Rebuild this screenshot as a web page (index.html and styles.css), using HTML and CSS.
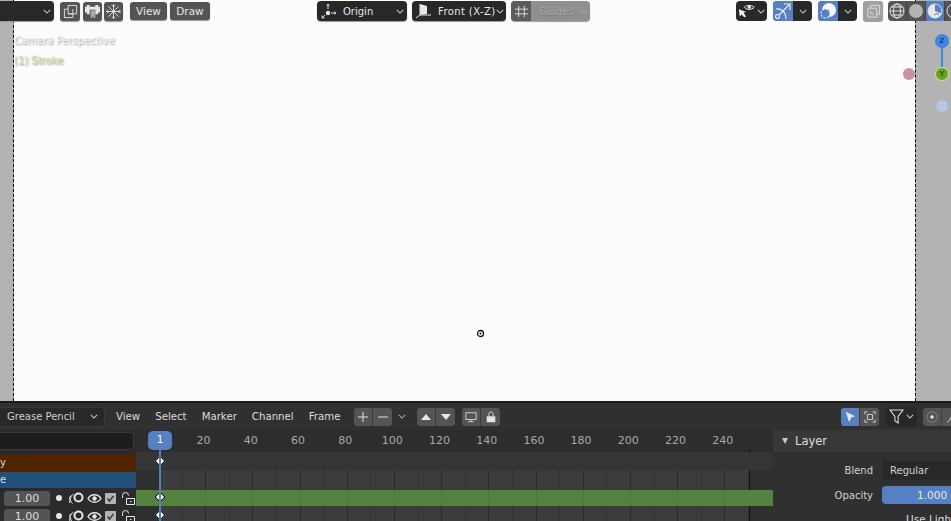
FILE: index.html
```html
<!DOCTYPE html>
<html lang="en">
<head>
    <meta charset="UTF-8">
    <title>Grease Pencil</title>
    <link rel="stylesheet" href="styles.css">
</head>
<body>
<div class="app">
    <!-- 3D viewport -->
    <div class="viewport">
        <div class="side side-left"></div>
        <div class="canvas">
            <p class="overlay-text">Camera Perspective</p>
            <p class="overlay-text stroke-name">(1) Stroke</p>
        </div>
        <div class="side side-right"></div>

        <div class="toolbar">
            <div class="group group-left">
                <div class="select mode-select"><svg class="chev" viewBox="0 0 10 6"><path d="M1 1l4 4 4-4"/></svg></div>
                <div class="icon-btns">
                    <button class="btn icon"><svg viewBox="0 0 16 16"><path d="M5.500 1.500h9v9h-9zM5.500 5.500h-4v9h9v-4"/><path d="M5.500 10.500h5v-5"/></svg></button>
                    <button class="btn icon"><svg viewBox="0 0 16 16"><path class="fill" d="M0 3h2V1h3v2h6V1h3v2h2v6h-2v2h-3V6H5v5H2V9H0z"/><path class="fill dim" d="M6 7h5v8H9v-2H8v2H6z"/></svg></button>
                    <button class="btn icon"><svg viewBox="0 0 16 16"><path d="M8 0v16M0 8h16M2.500 2.500l11 11M13.500 2.500l-11 11M6 1l2 2 2-2M6 15l2-2 2 2M1 6l2 2-2 2M15 6l-2 2 2 2"/></svg></button>
                </div>
                <button class="btn text-btn">View</button>
                <button class="btn text-btn">Draw</button>
            </div>
            <div class="group group-center">
                <div class="select origin-select">
                    <svg class="lead" viewBox="0 0 16 16"><circle class="fill" cx="7" cy="10" r="2.200"/><path d="M7 1v5M5.500 2.500L7 1l1.500 1.500M10 10h5M13.500 8.500L15 10l-1.500 1.500M1 15l3-3M1 12.500V15h2.500"/></svg>
                    <span>Origin</span>
                    <svg class="chev" viewBox="0 0 10 6"><path d="M1 1l4 4 4-4"/></svg>
                </div>
                <div class="select front-select">
                    <svg class="lead" viewBox="0 0 16 16"><path class="fill" d="M4 1l7 2v8l-7 1z"/><path d="M4 1v11L0 15M4 12h11"/></svg>
                    <span>Front (X-Z)</span>
                    <svg class="chev" viewBox="0 0 10 6"><path d="M1 1l4 4 4-4"/></svg>
                </div>
                <div class="guides">
                    <span class="guides-icon"><svg viewBox="0 0 16 16"><path d="M5 2v12M11 2v12M1 5.500h14M1 10.500h14"/></svg></span>
                    <span class="guides-label">Guides</span>
                    <svg class="chev" viewBox="0 0 10 6"><path d="M1 1l4 4 4-4"/></svg>
                </div>
            </div>
            <div class="group group-right">
                <div class="split vis-split">
                    <span class="split-icon"><svg viewBox="0 0 20 18"><path class="fill" d="M1 7l8 3-3 1 3 4-2 1-3-3-2 2z"/><path d="M7 5c2-3 8-3 11 0-3 3-8 3-11 0z"/><circle class="fill" cx="12.500" cy="4.800" r="1.800"/></svg></span>
                    <svg class="chev" viewBox="0 0 10 6"><path d="M1 1l4 4 4-4"/></svg>
                </div>
                <div class="split gizmo-split">
                    <span class="split-icon on"><svg viewBox="0 0 18 18"><circle cx="3.500" cy="14.500" r="2"/><path d="M5 13L15 3M10 2h6v6M2 7c5-1 10 3 10 10"/></svg></span>
                    <span class="split-chev"><svg class="chev" viewBox="0 0 10 6"><path d="M1 1l4 4 4-4"/></svg></span>
                </div>
                <div class="split overlay-split">
                    <span class="split-icon on"><svg viewBox="0 0 18 18"><circle class="fill" cx="10" cy="8" r="7"/><circle class="dash" cx="6.500" cy="11.500" r="4.500"/></svg></span>
                    <span class="split-chev"><svg class="chev" viewBox="0 0 10 6"><path d="M1 1l4 4 4-4"/></svg></span>
                </div>
                <button class="btn icon xray"><svg viewBox="0 0 16 16"><path d="M5 4V1.500h9.500V11H12M2 4.500h9.500V14H2zM5 7.500v3h3"/></svg></button>
                <div class="shading">
                    <span class="shade"><svg viewBox="0 0 16 16"><circle cx="8" cy="8" r="7"/><ellipse cx="8" cy="8" rx="3.500" ry="7"/><path d="M1 8h14M2 4h12M2 12h12"/></svg></span>
                    <span class="shade"><svg viewBox="0 0 16 16"><circle class="solid" cx="8" cy="8" r="7"/></svg></span>
                    <span class="shade on"><svg viewBox="0 0 16 16"><circle cx="8" cy="8" r="7"/><path class="fill" d="M8 1a7 7 0 0 0 0 14 7 7 0 0 0 6.500-4.500L8 8z"/><path class="cut" d="M7 12l3-1.500 2 1"/></svg></span>
                    <span class="shade"><svg viewBox="0 0 16 16"><circle cx="8" cy="8" r="7"/></svg></span>
                </div>
            </div>
        </div>

        <div class="gizmo">
            <span class="axis-line"></span>
            <span class="axis axis-z">Z</span>
            <span class="axis axis-y">Y</span>
            <span class="axis axis-x"></span>
            <span class="axis axis-nz"></span>
        </div>
        <svg class="cursor3d" viewBox="0 0 9 9"><circle cx="4.500" cy="4.500" r="3"/><circle class="dot" cx="4.500" cy="4.500" r="1"/></svg>
    </div>

    <!-- dope sheet -->
    <div class="dopesheet">
        <div class="ds-head">
            <div class="ds-head-left">
                <div class="mode-box"><span>Grease Pencil</span><svg class="chev" viewBox="0 0 10 6"><path d="M1 1l4 4 4-4"/></svg></div>
                <nav class="menu">
                    <span>View</span><span>Select</span><span>Marker</span><span>Channel</span><span>Frame</span>
                </nav>
                <div class="pair">
                    <span><svg viewBox="0 0 12 12"><path d="M6 1v10M1 6h10"/></svg></span>
                    <span><svg viewBox="0 0 12 12"><path d="M1 6h10"/></svg></span>
                </div>
                <svg class="chev lone" viewBox="0 0 10 6"><path d="M1 1l4 4 4-4"/></svg>
                <div class="pair">
                    <span><svg viewBox="0 0 12 12"><path class="fill" d="M6 3l5 6H1z"/></svg></span>
                    <span><svg viewBox="0 0 12 12"><path class="fill" d="M6 9L1 3h10z"/></svg></span>
                </div>
                <div class="pair screen-pair">
                    <span><svg viewBox="0 0 14 14"><path d="M1 2h12v8H1zM7 10v2M4 12.500h6"/></svg></span>
                    <span><svg viewBox="0 0 12 14"><path class="fill" d="M1 6h10v7H1z"/><path d="M3.500 6V3.500a2.500 2.500 0 0 1 5 0V6"/></svg></span>
                </div>
            </div>
            <div class="ds-head-right">
                <div class="pair select-pair">
                    <span class="on"><svg viewBox="0 0 14 14"><path class="fill" d="M2 1l11 5-4.500 1.500L6 13z"/></svg></span>
                    <span><svg viewBox="0 0 14 14"><path d="M1 4V1h3M10 1h3v3M13 10v3h-3M4 13H1v-3M4 4h6v6H4z"/></svg></span>
                </div>
                <div class="filter-box"><svg viewBox="0 0 14 14"><path d="M1 1h12L8.500 7v6L5.500 11V7z"/></svg><svg class="chev" viewBox="0 0 10 6"><path d="M1 1l4 4 4-4"/></svg></div>
                <div class="pair prop-pair">
                    <span><svg viewBox="0 0 14 14"><circle class="ring" cx="7" cy="7" r="6"/><circle class="fill" cx="7" cy="7" r="2"/></svg></span>
                    <span><svg viewBox="0 0 14 14"><path d="M1 13C6 13 5 1 13 1"/></svg></span>
                </div>
            </div>
        </div>

        <div class="ds-body">
            <div class="channels">
                <div class="search-row"><div class="search"></div></div>
                <div class="chan chan-brown">y</div>
                <div class="chan chan-blue">e</div>
                <div class="chan layer-row">
                    <span class="num">1.00</span>
                    <span class="row-dot"></span>
                    <svg class="ico-ghost" viewBox="0 0 15 13"><circle cx="9.500" cy="5.500" r="4"/><path class="thin" d="M4.500 2.200A5.500 5.500 0 0 0 3.500 11.500M2.200 3.500A6 6 0 0 0 1 11"/></svg>
                    <svg class="ico-eye" viewBox="0 0 15 13"><path d="M1 6.500c3-5 10-5 13 0-3 5-10 5-13 0z"/><circle class="fill" cx="7.500" cy="6.500" r="2.200"/></svg>
                    <span class="check"><svg viewBox="0 0 11 11"><path d="M2.500 5.500l2 2.500 4-5"/></svg></span>
                    <svg class="ico-lock" viewBox="0 0 15 13"><path d="M2.500 6V3.500a3 3 0 0 1 6 0M6.500 6.500h8v6h-8zM10 9.500h1.500"/></svg>
                </div>
                <div class="chan layer-row">
                    <span class="num">1.00</span>
                    <span class="row-dot"></span>
                    <svg class="ico-ghost" viewBox="0 0 15 13"><circle cx="9.500" cy="5.500" r="4"/><path class="thin" d="M4.500 2.200A5.500 5.500 0 0 0 3.500 11.500M2.200 3.500A6 6 0 0 0 1 11"/></svg>
                    <svg class="ico-eye" viewBox="0 0 15 13"><path d="M1 6.500c3-5 10-5 13 0-3 5-10 5-13 0z"/><circle class="fill" cx="7.500" cy="6.500" r="2.200"/></svg>
                    <span class="check"><svg viewBox="0 0 11 11"><path d="M2.500 5.500l2 2.500 4-5"/></svg></span>
                    <svg class="ico-lock" viewBox="0 0 15 13"><path d="M2.500 6V3.500a3 3 0 0 1 6 0M6.500 6.500h8v6h-8zM10 9.500h1.500"/></svg>
                </div>
            </div>

            <div class="timeline">
                <div class="ruler">
                    <span>20</span><span>40</span><span>60</span><span>80</span><span>100</span><span>120</span>
                    <span>140</span><span>160</span><span>180</span><span>200</span><span>220</span><span>240</span>
                </div>
                <div class="track track-summary"></div>
                <div class="track track-grid track-gap"></div>
                <div class="track track-green"></div>
                <div class="track track-grid track-plain"></div>
                <span class="playhead">1</span>
                <span class="key key-a"></span>
                <span class="key key-b"></span>
                <span class="key key-c"></span>
                <span class="playhead-line"></span>
            </div>

            <aside class="panel">
                <h3 class="panel-title"><span class="tri"></span>Layer</h3>
                <div class="prop prop-blend">
                    <label>Blend</label>
                    <div class="field dark">Regular</div>
                </div>
                <div class="prop prop-opacity">
                    <label>Opacity</label>
                    <div class="field blue">1.000</div>
                </div>
                <div class="cut-row">Use Lights</div>
            </aside>
        </div>
    </div>
</div>
</body>
</html>
```

FILE: styles.css
```css
* {
    margin: 0;
    padding: 0;
    box-sizing: border-box;
}
body {
    font-family: "DejaVu Sans", sans-serif;
    font-size: 10px;
    background: #303030;
    overflow: hidden;
}
svg {
    fill: none;
    stroke: #e0e0e0;
    stroke-width: 1;
}
svg .fill {
    fill: #e6e6e6;
    stroke: none;
}
svg .dim {
    fill: #a8a8a8;
}
.app {
    width: 951px;
    height: 521px;
    overflow: hidden;
    display: flex;
    flex-direction: column;
}

/* 3D viewport */
.viewport {
    position: relative;
    height: 401px;
    flex: none;
    display: flex;
    overflow: hidden;
}
.side {
    background: #b3b3b3;
}
.side-left {
    width: 14px;
    border-right: 1px dashed #000;
}
.side-right {
    width: 36px;
    border-left: 1px dashed #000;
}
.canvas {
    flex: 1;
    background: #fcfcfc;
    padding-top: 34px;
}
.overlay-text {
    height: 20px;
    line-height: 14px;
    color: #f6f6f6;
    text-shadow: 1px 1px 2px #8a8a8a;
}
.stroke-name {
    color: #d4e4a4;
}
.toolbar {
    position: absolute;
    top: 1px;
    left: 0;
    width: 951px;
    height: 20px;
    display: flex;
}
.group {
    display: flex;
    align-items: center;
    height: 20px;
}
.group-left {
    width: 317px;
}
.group-center {
    width: 419px;
    gap: 5px;
}
.group-right {
    flex: 1;
    overflow: hidden;
    height: 21px;
    align-items: flex-start;
}
.btn {
    height: 19px;
    border: none;
    border-radius: 3px;
    background: #545454;
    color: #e6e6e6;
    font: inherit;
    box-shadow: 0 1px 1px #9a9a9a;
    display: flex;
    align-items: center;
    justify-content: center;
}
.btn.icon svg {
    width: 15px;
    height: 15px;
}
.select {
    height: 20px;
    background: #282828;
    border-radius: 4px;
    color: #e6e6e6;
    display: flex;
    align-items: center;
    box-shadow: 0 1px 1px #9a9a9a;
}
.chev {
    width: 8px;
    height: 5px;
    stroke: #c8c8c8;
    stroke-width: 1.300;
    flex: none;
}
.mode-select {
    width: 54px;
    border-radius: 0 4px 4px 0;
    justify-content: flex-end;
    padding-right: 3px;
}
.icon-btns {
    display: flex;
    gap: 2px;
    margin: 0 7px 0 6px;
}
.icon-btns .btn {
    width: 19px;
}
.icon-btns .btn:first-child {
    width: 20px;
    margin-right: 1px;
}
.text-btn {
    width: 37px;
    height: 18px;
    margin-right: 3px;
    font-size: 10.500px;
}
.text-btn + .text-btn {
    width: 40px;
}
.select .lead {
    width: 16px;
    height: 16px;
    margin-left: 4px;
    flex: none;
}
.origin-select {
    width: 90px;
}
.origin-select span {
    margin: 0 auto 0 6px;
}
.origin-select .chev {
    margin-right: 3px;
}
.front-select {
    width: 94px;
}
.front-select span {
    margin: 0 auto 0 6px;
    letter-spacing: .4px;
}
.front-select .chev {
    margin-right: 2px;
}
.guides {
    width: 79px;
    height: 20px;
    display: flex;
    align-items: center;
    border-radius: 4px;
    overflow: hidden;
    background: #8f8f8f;
    box-shadow: 0 1px 1px #9a9a9a;
}
.guides-icon {
    width: 20px;
    height: 20px;
    background: #5c5c5c;
    display: flex;
    align-items: center;
    justify-content: center;
}
.guides-icon svg {
    width: 15px;
    height: 15px;
}
.guides-label {
    margin-left: 8px;
    color: #a8a8a8;
    text-shadow: 0 1px 1px #777;
}
.guides .chev {
    margin-left: 6px;
    stroke: #a8a8a8;
}
.split {
    height: 20px;
    flex: none;
    display: flex;
    align-items: center;
    background: #282828;
    border-radius: 4px;
    overflow: hidden;
}
.vis-split {
    width: 31px;
    margin-right: 6px;
}
.vis-split .split-icon {
    width: 20px;
    margin-left: 1px;
}
.split-icon {
    width: 20px;
    height: 20px;
    display: flex;
    align-items: center;
    justify-content: center;
}
.split-icon svg {
    width: 18px;
    height: 18px;
    stroke-width: 1.100;
    stroke: #f0f0f0;
}
.split-icon .fill {
    fill: #f4f4f4;
}
.split-icon.on {
    background: #5680c2;
}
.split-chev {
    flex: 1;
    display: flex;
    justify-content: center;
}
.gizmo-split,
.overlay-split {
    width: 39px;
    margin-right: 6px;
}
.overlay-split .dash {
    fill: #5680c2;
    stroke-dasharray: 2 1.500;
}
.xray {
    width: 20px;
    height: 20px;
    flex: none;
    background: #a0a0a0;
    margin-right: 5px;
}
.shading {
    display: flex;
    height: 20px;
    width: 63px;
    flex: none;
    background: #545454;
    border-radius: 4px 0 0 4px;
    overflow: hidden;
}
.shade {
    width: 19px;
    height: 20px;
    flex: none;
    display: flex;
    align-items: center;
    justify-content: center;
    border-right: 1px solid #444;
}
.shade svg {
    width: 16px;
    height: 16px;
}
.shade svg .solid {
    fill: #b4b4b4;
    stroke: none;
}
.shade .cut {
    stroke: #5680c2;
}
.shade.on {
    background: #5680c2;
}

/* navigation gizmo */
.gizmo {
    position: absolute;
    left: 902px;
    top: 34px;
    width: 49px;
    height: 80px;
}
.axis {
    position: absolute;
    border-radius: 50%;
    font-size: 7px;
    text-align: center;
    color: #1a1a1a;
}
.axis-z {
    left: 33px;
    top: 0;
    width: 14px;
    height: 14px;
    line-height: 14px;
    background: #3d86e4;
}
.axis-y {
    left: 33px;
    top: 33px;
    width: 14px;
    height: 14px;
    line-height: 12px;
    background: #63a31e;
    border: 1px solid #d2e6a8;
}
.axis-x {
    left: 1px;
    top: 34px;
    width: 12px;
    height: 12px;
    background: #c8939c;
}
.axis-nz {
    left: 34px;
    top: 66px;
    width: 12px;
    height: 12px;
    background: #b4c8e4;
}
.axis-line {
    position: absolute;
    left: 39px;
    top: 7px;
    width: 2px;
    height: 30px;
    background: #3d86e4;
}
.cursor3d {
    position: absolute;
    left: 476px;
    top: 329px;
    width: 9px;
    height: 9px;
    stroke: #111;
    stroke-width: 1.300;
}
.cursor3d .dot {
    fill: #111;
    stroke: none;
}

/* dope sheet */
.dopesheet {
    flex: 1;
    min-height: 0;
    display: flex;
    flex-direction: column;
    border-top: 2px solid #1a1a1a;
    color: #dcdcdc;
}
.ds-head {
    height: 27px;
    flex: none;
    background: #303030;
    display: flex;
    align-items: center;
    justify-content: space-between;
}
.ds-head-left {
    display: flex;
    align-items: center;
}
.ds-head-right {
    display: flex;
    align-items: center;
    width: 110px;
    flex: none;
    overflow: hidden;
}
.mode-box {
    width: 105px;
    height: 20px;
    background: #282828;
    border: 1px solid #3a3a3a;
    border-left: none;
    border-radius: 0 4px 4px 0;
    display: flex;
    align-items: center;
    justify-content: space-between;
    padding: 0 6px 0 7px;
    color: #cfcfcf;
}
.menu {
    display: flex;
    gap: 15px;
    margin-left: 11px;
    width: 238px;
    flex: none;
    color: #dcdcdc;
    font-size: 10.200px;
}
.pair {
    display: flex;
    height: 18px;
    border-radius: 3px;
    overflow: hidden;
    flex: none;
}
.pair span {
    width: 19px;
    height: 18px;
    background: #545454;
    border-right: 1px solid #3c3c3c;
    display: flex;
    align-items: center;
    justify-content: center;
}
.pair span:last-child {
    border-right: none;
}
.pair svg {
    width: 12px;
    height: 12px;
}
.lone {
    margin: 0 6px;
    stroke: #aaa;
}
.lone + .pair {
    margin-left: 5px;
}
.screen-pair {
    margin-left: 7px;
}
.pair span.on {
    background: #5680c2;
}
.filter-box {
    width: 31px;
    height: 20px;
    margin: 0 6px 0 7px;
    background: #282828;
    border-radius: 4px;
    display: flex;
    align-items: center;
    gap: 2px;
    padding-left: 3px;
    flex: none;
}
.filter-box svg:first-child {
    width: 15px;
    height: 15px;
}
.prop-pair {
    border-radius: 3px 0 0 3px;
}
.ring {
    stroke: #888;
}
.ds-body {
    flex: 1;
    min-height: 0;
    display: grid;
    grid-template-columns: 136px 637px 178px;
}
.channels {
    background: #2b2b2b;
    overflow: hidden;
}
.search-row {
    height: 24px;
    padding-top: 2px;
}
.search {
    width: 134px;
    height: 18px;
    background: #1d1d1d;
    border: 1px solid #3a3a3a;
    border-left: none;
    border-radius: 0 4px 4px 0;
}
.chan {
    line-height: 18px;
    color: #d8d8d8;
}
.chan-brown {
    height: 18px;
    background: #4f2500;
}
.chan-blue {
    height: 16px;
    background: #23507a;
    margin-bottom: 2px;
    line-height: 16px;
}
.layer-row {
    height: 16px;
    margin-bottom: 2px;
    display: flex;
    align-items: center;
}
.layer-row svg {
    width: 15px;
    height: 13px;
    flex: none;
    stroke: #e8e8e8;
}
.ico-ghost circle {
    stroke-width: 2;
}
.ico-eye {
    margin-left: 3px;
    stroke-width: 1.300;
}
.num {
    width: 46px;
    height: 15px;
    margin-left: 4px;
    background: #545454;
    border-radius: 3px;
    text-align: center;
    line-height: 15px;
    color: #dcdcdc;
    font-size: 11px;
}
.row-dot {
    width: 6px;
    height: 6px;
    margin: 0 7px 0 6px;
    border-radius: 50%;
    background: #e6e6e6;
}
.check {
    width: 11px;
    height: 11px;
    margin: 0 4px 0 3px;
    background: #b4b4b4;
    border-radius: 1px;
    flex: none;
    display: flex;
}
.layer-row .check svg {
    width: 11px;
    height: 11px;
    stroke: #3a3a3a;
    stroke-width: 1.500;
}
.timeline {
    position: relative;
    overflow: hidden;
    background: #2f2f2f;
    display: flex;
    flex-direction: column;
}
.ruler {
    height: 22px;
    flex: none;
    background-color: #2d2d2d;
    background-image:
        linear-gradient(#000, #000),
        repeating-linear-gradient(90deg, #222 0 1px, transparent 1px 47.200px);
    background-size: 1px 2px, 591px 2px;
    background-position: 613px 100%, 22px 100%;
    background-repeat: no-repeat;
    display: flex;
    padding-left: 44px;
    color: #a8a8a8;
    line-height: 21px;
    font-size: 11px;
}
.ruler span {
    width: 47.200px;
    flex: none;
    text-align: center;
}
.track-summary {
    height: 18px;
    flex: none;
    background: #353535;
}
/* lines only inside the frame range, darker either side of it */
.track-grid {
    background-color: #2f2f2f;
    background-image:
        linear-gradient(#111, #111),
        repeating-linear-gradient(90deg, #2a2a2a 0 1px, transparent 1px 47.200px),
        repeating-linear-gradient(90deg, #343434 0 1px, #3c3c3c 1px 23.600px);
    background-size: 1px 100%, 591px 100%, 591px 100%;
    background-position: 613px 0, 22px 0, 22px 0;
    background-repeat: no-repeat;
}
.track-gap {
    height: 20px;
    flex: none;
}
.track-green {
    height: 16px;
    flex: none;
    background-color: #53813f;
    background-image:
        repeating-linear-gradient(90deg, #4e7a3b 0 1px, transparent 1px 47.200px);
    background-size: 591px 100%;
    background-position: 22px 0;
    background-repeat: no-repeat;
}
.track-plain {
    flex: 1;
}
.playhead-line {
    position: absolute;
    left: 23px;
    top: 19px;
    bottom: 0;
    width: 2px;
    background: #5680c2;
}
.playhead {
    position: absolute;
    left: 12px;
    top: 1px;
    width: 24px;
    height: 19px;
    background: #5680c2;
    border-radius: 5px;
    color: #f4f4f4;
    font-size: 11px;
    text-align: center;
    line-height: 18px;
}
.key {
    position: absolute;
    left: 19.500px;
    width: 8px;
    height: 8px;
    background: #fff;
    border: 1px solid #000;
    transform: rotate(45deg);
}
.key-a { top: 27px; }
.key-b { top: 63px; }
.key-c { top: 81px; }

/* properties panel */
.panel {
    background: #303030;
    overflow: hidden;
}
.panel-title {
    height: 22px;
    background: #383838;
    font-weight: normal;
    font-size: 11.500px;
    line-height: 22px;
    color: #dcdcdc;
    display: flex;
    align-items: center;
    padding-left: 9px;
}
.tri {
    width: 0;
    height: 0;
    border-left: 3.500px solid transparent;
    border-right: 3.500px solid transparent;
    border-top: 6px solid #c8c8c8;
    margin-right: 7px;
}
.prop {
    display: flex;
    align-items: center;
}
.prop-blend {
    height: 19px;
    margin-top: 9px;
}
.prop-opacity {
    height: 18px;
    margin-top: 6px;
}
.prop label {
    width: 100px;
    flex: none;
    text-align: right;
    margin-right: 9px;
    color: #d0d0d0;
    font-size: 10px;
}
.field {
    height: 100%;
    flex: 1;
    border-radius: 4px 0 0 4px;
    display: flex;
    align-items: center;
    font-size: 10px;
}
.field.dark {
    background: #282828;
    padding-left: 8px;
    color: #d0d0d0;
}
.field.blue {
    background: #5680c2;
    padding-left: 35px;
    color: #e8e8e8;
    font-size: 10.500px;
}
.cut-row {
    margin: 8px 0 0 133px;
    white-space: nowrap;
    font-size: 10.500px;
    line-height: 14px;
}
```
